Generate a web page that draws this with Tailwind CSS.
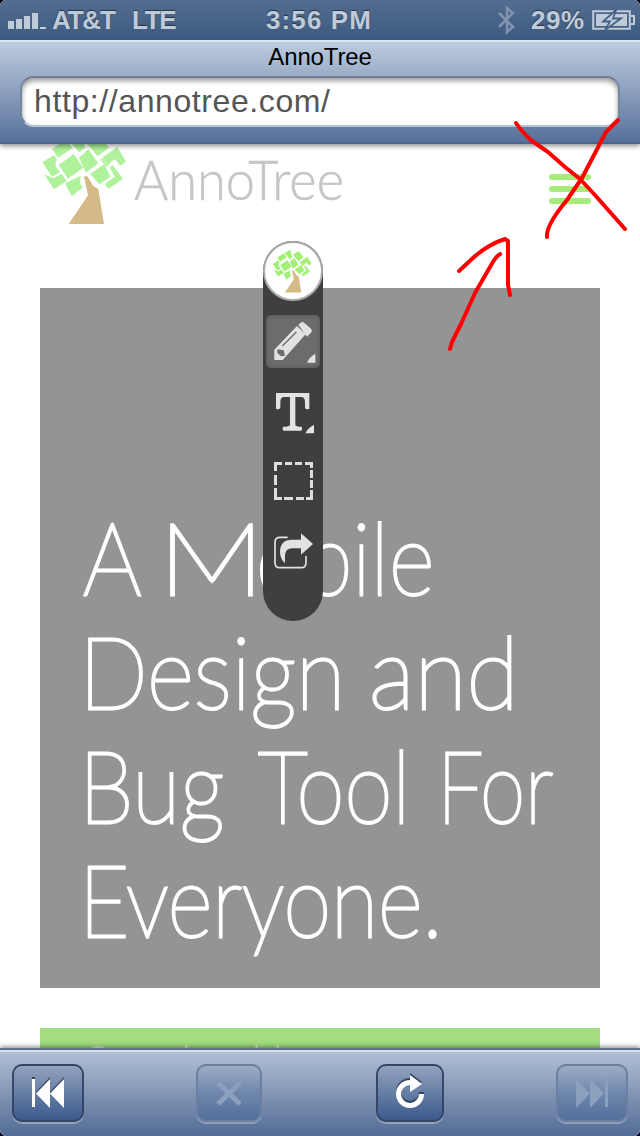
<!DOCTYPE html>
<html lang="en">
<head>
<meta charset="utf-8">
<title>AnnoTree</title>
<script src="https://cdn.jsdelivr.net/npm/@tailwindcss/browser@4"></script>
</head>
<body class="bg-black">
<svg class="hidden">
  <symbol id="tree" viewBox="30 -15 264 285">
    <g fill="currentColor">
      <path d="M66 42L108 12L127 40L85 68zM112 12L150 -10L165 38L148 52zM168 22L205 -2L237 38L203 64zM218 66L262 36L288 80L270 92L255 72L235 88zM37 82L72 60L80 72L76 92L90 112L66 125zM86 90L131 57L160 98L114 131zM147 68L175 43L205 85L168 113zM180 117L222 88L242 125L208 148zM248 90L279 131L236 161L224 148L254 125L240 98zM42 118L70 130L95 117L110 138L72 163zM105 145L152 122L150 145L158 158L125 184z"/>
      <path d="M208 72L228 96L240 88L226 68z" opacity=".8"/>
    </g>
    <path d="M162 124L172 124L190 153L205 163L222 267L116 267L174 181z" fill="#d4ba86"/>
  </symbol>
</svg>
<main class="relative flex h-[1136px] w-[640px] flex-col overflow-hidden rounded-[6px] bg-white font-['Liberation_Sans',sans-serif]">
  <header class="relative z-10 h-36 shrink-0 shadow-[0_2px_5px_rgba(0,0,0,0.45)]">
    <div class="flex h-10 items-center bg-linear-to-b from-[#526d8f] to-[#3d5a80] text-[26px] font-bold leading-10 text-[#c0cbd9] [text-shadow:0_-1px_1px_rgba(0,0,0,0.5)]">
      <svg class="ml-2 h-[18px] w-[38px]" viewBox="0 0 38 18" fill="#c0cbd9"><path d="M0 10h6v8H0zM8 8h6v10H8zM16 5h6v13h-6zM24 2h6v16h-6zM32 16h6v2h-6z"/></svg>
      <span class="ml-[6px] w-[80px] whitespace-nowrap tracking-[-1.2px]">AT&amp;T</span>
      <span class="w-[134px] tracking-[-1.3px]">LTE</span>
      <span class="w-[231px] whitespace-nowrap tracking-[1.1px]">3:56 PM</span>
      <svg class="h-[32px] w-[20px]" viewBox="0 0 20 32" fill="none" stroke="#7f93ae" stroke-width="2.6"><path d="M2 9L16 23L10 28V4L16 9L2 23"/></svg>
      <span class="ml-[14px] w-[61px] tracking-[0.5px]">29%</span>
      <svg class="h-[22px] w-[43px]" viewBox="0 0 43 22"><path d="M1.2 2.2h36.6v17.6H1.2zM39 7h3v8h-3" fill="none" stroke="#c0cbd9" stroke-width="2"/><path d="M4 5h31v12H4z" fill="#c0cbd9"/><path d="M24 1L11 12.500h7L13 21L29 9.500h-8z" fill="#c0cbd9" stroke="#456186" stroke-width="1.800"/></svg>
    </div>
    <div class="flex h-[104px] flex-col border-t-2 border-b-2 border-t-[#dce6f0] border-b-[#4a648b] bg-linear-to-b from-[#bdcbdd] via-[#8b9fbd] to-[#57709a] px-5">
      <h1 class="h-[34px] text-center text-[24px] leading-[30px] tracking-[-0.15px] text-black">AnnoTree</h1>
      <div class="h-[51px] rounded-[14px] border-2 border-t-[#6f7d93] border-x-[#75869f] border-b-[#b7c3d3] bg-white pl-3 text-[32px] leading-[46px] tracking-[0.6px] text-[#555] shadow-[inset_0_3px_5px_rgba(0,0,0,0.4)]">http://annotree.com/</div>
    </div>
  </header>
  <section class="h-[904px] shrink-0 overflow-hidden px-10">
    <div class="flex h-36 items-start">
      <svg class="-mt-[14px] h-[95px] w-[88px] text-[#b0f29c]"><use href="#tree"/></svg>
      <span class="ml-[6px] mt-[5px] w-[415px] font-['Lato'] text-[56px] font-light leading-[60px] text-[#c6c6c6]"><span class="inline-block origin-left scale-x-[0.935] [-webkit-text-stroke:0.6px_#c6c6c6]">AnnoTree</span></span>
      <div class="mt-[30px] flex w-[42px] flex-col gap-[6px]">
        <i class="h-[6px] rounded-full bg-[#a7ec78]"></i><i class="h-[6px] rounded-full bg-[#a7ec78]"></i><i class="h-[6px] rounded-full bg-[#a7ec78]"></i>
      </div>
    </div>
    <div class="h-[700px] bg-[#949494] pl-[39px] pt-[211px] font-['Lato'] text-[100px] font-thin leading-[114px] text-white [-webkit-text-stroke:3px_white]">
      <div class="flex whitespace-nowrap"><span class="ml-[4px] w-[75px] origin-left scale-x-[0.92]">A</span><span class="w-[98px] origin-left scale-x-[1.2]">M</span><span class="origin-left scale-x-[0.88]">obile</span></div>
      <div class="flex whitespace-nowrap"><span class="w-[290px] origin-left scale-x-[0.906]">Design</span><span class="origin-left scale-x-[0.96]">and</span></div>
      <div class="flex whitespace-nowrap"><span class="w-[179px] origin-left scale-x-[0.88]">Bug</span><span class="w-[179px] origin-left scale-x-[0.87]">Tool</span><span class="origin-left scale-x-[0.82]">For</span></div>
      <div class="origin-left scale-x-[0.864] whitespace-nowrap">Everyone.</div>
    </div>
    <div class="mt-10 flex h-40 bg-[#a3dd7f] pl-[44px] pt-[9px] font-['Lato'] text-[50px] font-light leading-[50px] text-[#e3eedb]"><span class="w-[133px]">Send</span><span class="tracking-[10px]">all</span></div>
  </section>
  <footer class="relative z-10 flex h-[88px] shrink-0 items-center border-t-2 border-[#5c7492] bg-linear-to-b from-[#b3c1d8] via-[#8397b5] to-[#536c96] px-3 shadow-[0_-1px_5px_rgba(0,0,0,0.5),inset_0_2px_0_#d6dfea]">
    <button class="flex h-[58px] w-[72px] items-center justify-center rounded-[10px] border-2 border-[#344766] bg-linear-to-b from-[#93a3be] to-[#3b5a8c] shadow-[0_2px_0_#94a4bd]"><svg class="h-8 w-8" viewBox="0 0 32 32"><path d="M0 0h3v29H0zM18 0v30L4 15zM32 0v30L18 15z" fill="#34435c"/><path d="M0 2h3v28H0zM18 2v29L4 16.500zM32 2v29L18 16.500z" fill="#fff"/></svg></button>
    <button class="ml-[112px] flex h-[58px] w-[66px] items-center justify-center rounded-[10px] border-2 border-[#6b7f9e] bg-linear-to-b from-[#9dadc6] via-[#6f87ab] to-[#526f9b] shadow-[0_2px_0_#8c9eb9]"><svg class="h-[26px] w-[26px]" viewBox="0 0 26 26"><path d="M2 3L24 24M24 3L2 24" stroke="#8ba0bf" stroke-width="5"/></svg></button>
    <button class="ml-[114px] flex h-[58px] w-[68px] items-center justify-center rounded-[10px] border-2 border-[#344766] bg-linear-to-b from-[#93a3be] to-[#3b5a8c] shadow-[0_2px_0_#94a4bd]"><svg class="-mt-[5px] h-9 w-[30px]" viewBox="0 0 30 36"><path d="M15 9.500A11.500 11.500 0 1 0 26.500 21" fill="none" stroke="#34435c" stroke-width="5" transform="translate(0 -2)"/><path d="M15 0L27 9L15 17z" fill="#34435c"/><path d="M15 9.500A11.500 11.500 0 1 0 26.500 21" fill="none" stroke="#fff" stroke-width="5"/><path d="M15 2L27 11L15 19z" fill="#fff"/></svg></button>
    <button class="ml-[112px] flex h-[58px] w-[72px] items-center justify-center rounded-[10px] border-2 border-[#6b7f9e] bg-linear-to-b from-[#9dadc6] via-[#6f87ab] to-[#526f9b] shadow-[0_2px_0_#8c9eb9]"><svg class="h-8 w-8" viewBox="0 0 32 32"><path d="M29 2h3v28h-3zM14 2v29L28 16.500zM0 2v29L14 16.500z" fill="#8ba0bf"/></svg></button>
  </footer>

  <!-- Floating annotation tools -->
  <aside class="absolute left-[263px] top-[241px] z-20 flex h-[380px] w-[60px] flex-col items-center rounded-[30px] bg-[#3f3f3f]">
    <div class="flex size-[60px] items-center justify-center rounded-full border-2 border-[#aaa] bg-white text-[#a4ef79]"><svg class="-ml-[2px] h-[44px] w-[42px]"><use href="#tree"/></svg></div>
    <div class="mt-[14px] h-[53px] w-[54px] rounded-[5px] bg-[#6c6c6c] shadow-[inset_0_0_4px_#505050]">
      <svg class="h-full w-full" viewBox="48 240 162 159" fill="#e2e2e2"><path d="M141 273L167 298L98 375H73V344z"/><path d="M145 269L155 261Q159 260 164 265L183 281Q188 287 184 292L171 305z"/><path d="M97 333L139 291" stroke="#6c6c6c" stroke-width="4"/><path d="M82 343L101 346L105 362L93 364L82 354z" fill="#6c6c6c"/><path d="M196 356V383H171Q176 368 196 356z"/></svg>
    </div>
    <svg class="mt-[24px] h-[42px] w-[42px]" viewBox="66 469 126 126" fill="#e2e2e2"><path d="M78 472H178V519Q168 524 165 516V498Q164 484 154 484H136V567Q137 573 155 573Q158 581 154 585H101Q95 580 100 573Q118 573 120 567V484H102Q92 484 91 498V516Q87 524 78 519z"/><path d="M192 567V593H166Q171 579 192 567z"/></svg>
    <svg class="mt-[28px] h-[39px] w-[39px]" viewBox="0 0 39 39" fill="#dedede"><path d="M0 0h8v3H3v6H0zM11 0h7v3h-7zM21 0h7v3h-7zM31 0h8v6h-3V3h-5zM0 13h3v10H0zM0 26h3v9h5v3H0zM36 8h3v8h-3zM36 18h3v8h-3zM36 28h3v10h-7v-3h4zM10 35h9v3h-9zM22 35h8v3h-8z"/></svg>
    <svg class="ml-[2px] mt-[32px] h-[36px] w-[40px]" viewBox="72 310 120 108"><path d="M113 323H90Q75 323 75 338V399Q75 414 90 414H153Q168 414 168 399V379" fill="none" stroke="#e2e2e2" stroke-width="5"/><path d="M153 311L189 343L153 375V356H127Q106 356 105 377V400Q90 388 90 366Q91 330 125 330H153z" fill="#e2e2e2"/></svg>
  </aside>
  <svg class="pointer-events-none absolute left-0 top-0 z-30 h-[400px] w-[640px]" viewBox="0 0 640 400" fill="none" stroke="#f00" stroke-width="4" stroke-linecap="round" stroke-linejoin="round"><path d="M516 123Q522 132 532 141L548 152L565 167L580 179L594 194L625 229M618 120L606 132L582 178L567 200Q546 225 547 237M459 271L474 257Q489 244 505 239L508 241V285L510 295M500 254Q496 256 490 267L475 293L461 324L452 342L450 349"/></svg>
</main>
</body>
</html>
